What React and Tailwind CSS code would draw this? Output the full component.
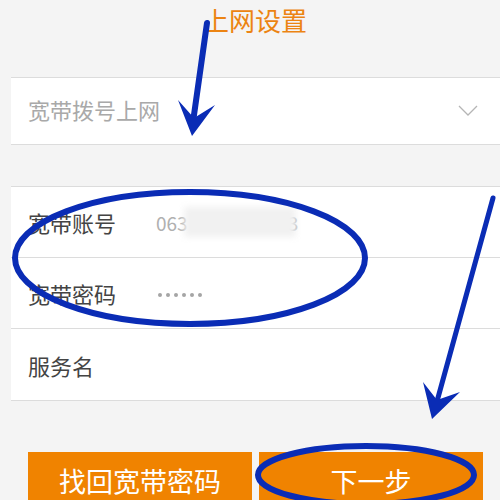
import React from 'react';

const font = { fontFamily: '"Noto Sans CJK SC", "Noto Sans", sans-serif' };

const Row = ({ label, children, last }) => (
  <div className={`h-[71px] flex items-center pl-[17px] ${last ? '' : 'border-b border-[#dcdcdc]'}`}>
    <span className="text-[22px] text-[#444] w-[128px] leading-none">{label}</span>
    {children}
  </div>
);

export default function App() {
  return (
    <div className="relative w-[500px] h-[500px] overflow-hidden bg-[#f4f4f4]" style={font}>
      {/* Header */}
      <div className="h-[77px] flex justify-center pt-[2px]">
        <h1 className="text-[26px] text-[#ec8412] leading-[36px] ml-[10px]">上网设置</h1>
      </div>

      {/* Connection type select */}
      <div className="ml-[11px] h-[68px] bg-white border-y border-[#dcdcdc] flex items-center justify-between pl-[17px] pr-[22px]">
        <span className="text-[22px] text-[#a9a9a9] leading-none -mt-[4px]">宽带拨号上网</span>
        <svg width="20" height="12" viewBox="0 0 20 12" fill="none" stroke="#b5b5b5" strokeWidth="1.3">
          <path d="M1 1 L10 10 L19 1" />
        </svg>
      </div>

      {/* Account fields */}
      <div className="ml-[11px] mt-[41px] bg-white border-y border-[#dcdcdc]">
        <Row label="宽带账号">
          <span className="flex items-center text-[19px] text-[#b0b0b0] leading-none">
            063
            <span className="inline-block w-[112px] h-[30px] bg-[#f1f1f1] blur-[3px] -ml-[4px]" />
            <span className="-ml-[8px]">3</span>
          </span>
        </Row>
        <Row label="宽带密码">
          <span className="flex gap-[4px] pt-[4px] ml-[2px]">
            {[0, 1, 2, 3, 4, 5].map((i) => (
              <span key={i} className="w-[4px] h-[4px] rounded-full bg-[#a5a5a5]" />
            ))}
          </span>
        </Row>
        <Row label="服务名" last />
      </div>

      {/* Buttons */}
      <div className="flex gap-[7px] ml-[28px] mt-[51px]">
        <button className="w-[224px] h-[56px] bg-[#f08300] text-white text-[27px] flex justify-center leading-none items-center">
          找回宽带密码
        </button>
        <button className="w-[224px] h-[56px] bg-[#f08300] text-white text-[27px] flex justify-center leading-none items-center">
          下一步
        </button>
      </div>

      {/* Annotations */}
      <svg className="absolute inset-0 pointer-events-none" width="500" height="500" viewBox="0 0 500 500" fill="none">
        <path d="M207 23 L193 122" stroke="#0a2cb5" strokeWidth="6" strokeLinecap="round" />
        <path d="M178 100 L192 136 L215 105 L194 118 Z" fill="#0a2cb5" />
        <ellipse cx="190" cy="258" rx="175" ry="66" stroke="#0a2cb5" strokeWidth="6" />
        <path d="M493 198 L436 405" stroke="#0a2cb5" strokeWidth="5" strokeLinecap="round" />
        <path d="M423 382 L432 419 L460 392 L437 400 Z" fill="#0a2cb5" />
        <ellipse cx="366" cy="475" rx="108" ry="29" stroke="#0a2cb5" strokeWidth="6" />
      </svg>
    </div>
  );
}
